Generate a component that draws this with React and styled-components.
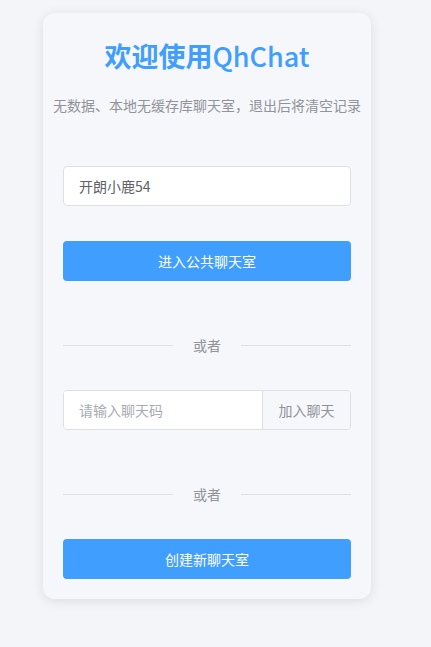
import React from "react";
import styled, { createGlobalStyle } from "styled-components";

const GlobalStyle = createGlobalStyle`
  html, body {
    margin: 0;
    padding: 0;
    background: #f4f5f9;
    font-family: "Noto Sans CJK SC", "Noto Sans", sans-serif;
  }
  * {
    box-sizing: border-box;
  }
`;

const Page = styled.div`
  width: 431px;
  min-height: 647px;
  padding: 13px 0 0 43px;
`;

const Card = styled.div`
  width: 328px;
  padding: 22px 20px 20px;
  background: #f6f7fb;
  border-radius: 12px;
  box-shadow: 0 2px 12px rgba(0, 0, 0, 0.1);
`;

const Title = styled.h1`
  margin: 0;
  height: 42px;
  line-height: 42px;
  text-align: center;
  font-size: 27px;
  font-weight: 700;
  color: #409eff;
  span {
    font-weight: 500;
  }
`;

const Subtitle = styled.p`
  margin: 18px -20px 0;
  line-height: 20px;
  text-align: center;
  font-size: 14px;
  color: #909399;
  white-space: nowrap;
`;

const Input = styled.input`
  display: block;
  width: 100%;
  height: 40px;
  margin-top: ${props => props.$top || 0}px;
  padding: 0 15px;
  border: 1px solid #dcdfe6;
  border-radius: 4px;
  background: #fff;
  font-family: inherit;
  font-size: 14px;
  color: #606266;
  outline: none;
  &::placeholder {
    color: #a8abb2;
  }
`;

const Button = styled.button`
  display: block;
  width: 100%;
  height: 40px;
  margin-top: ${props => props.$top}px;
  border: none;
  border-radius: 4px;
  background: #409eff;
  color: #fff;
  font-family: inherit;
  font-size: 14px;
  cursor: pointer;
`;

const Divider = styled.div`
  display: flex;
  align-items: center;
  gap: 20px;
  height: 20px;
  margin-top: ${props => props.$top}px;
  color: #909399;
  font-size: 14px;
  &::before,
  &::after {
    content: "";
    flex: 1;
    height: 1px;
    background: #dcdfe6;
  }
`;

const Group = styled.div`
  display: flex;
  height: 40px;
  margin-top: ${props => props.$top}px;
  border: 1px solid #dcdfe6;
  border-radius: 4px;
  overflow: hidden;
  background: #fff;
`;

const GroupInput = styled.input`
  flex: 1;
  min-width: 0;
  padding: 0 15px;
  border: none;
  outline: none;
  font-family: inherit;
  font-size: 14px;
  color: #606266;
  &::placeholder {
    color: #a8abb2;
  }
`;

const Append = styled.div`
  display: flex;
  align-items: center;
  justify-content: center;
  width: 88px;
  border-left: 1px solid #dcdfe6;
  background: #f5f7fa;
  color: #909399;
  font-size: 14px;
  cursor: pointer;
`;

export default function App() {
  return (
    <Page>
      <GlobalStyle />
      <Card>
        <Title>
          欢迎使用<span>QhChat</span>
        </Title>
        <Subtitle>无数据、本地无缓存库聊天室，退出后将清空记录</Subtitle>
        <Input $top={51} defaultValue="开朗小鹿54" />
        <Button $top={35}>进入公共聊天室</Button>
        <Divider $top={54}>或者</Divider>
        <Group $top={35}>
          <GroupInput placeholder="请输入聊天码" />
          <Append>加入聊天</Append>
        </Group>
        <Divider $top={54}>或者</Divider>
        <Button $top={35}>创建新聊天室</Button>
      </Card>
    </Page>
  );
}
